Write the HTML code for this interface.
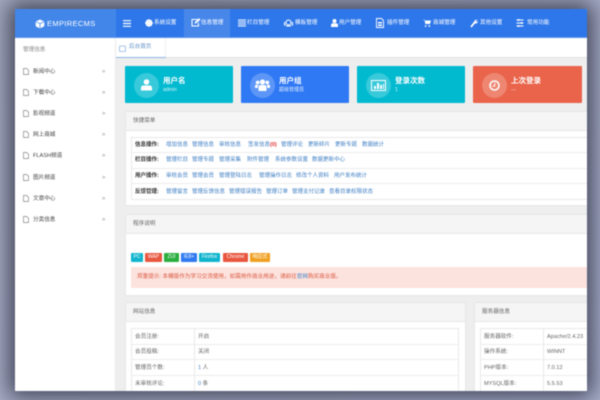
<!DOCTYPE html>
<html lang="zh"><head><meta charset="utf-8"><title>EmpireCMS</title>
<style>
html,body{margin:0;padding:0}
body{width:600px;height:400px;overflow:hidden;position:relative;background:linear-gradient(135deg,#a6abc2,#aab1cd);font-family:"Liberation Sans","Noto Sans CJK SC",sans-serif;}
#w{position:absolute;left:15px;top:9px;width:572px;height:382px;background:#fff;box-shadow:0 0 22px 6px rgba(30,32,50,.75);border-radius:1px;overflow:hidden;filter:blur(.4px)}
#w div,#w span,#w svg{position:absolute}
.t{white-space:nowrap;font-size:5.6px;line-height:8px;color:#666}
.n{white-space:nowrap;font-size:5.6px;line-height:8px;color:#fff;top:10px}
.l{white-space:nowrap;font-size:5.5px;line-height:8px;color:#3f7fc4}
.b{white-space:nowrap;font-size:5.5px;line-height:8px;color:#333;font-weight:bold;left:120px}
.m{font-size:6px;color:#999;left:87px}
.c{border-radius:1px}
.ci{left:9px;top:7px;width:25px;height:25px;border-radius:50%;background:rgba(255,255,255,.22)}
.h{white-space:nowrap;color:#fff;font-weight:bold;font-size:7.5px;line-height:10px;left:38px;top:10px}
.s{white-space:nowrap;color:rgba(255,255,255,.85);font-size:5px;line-height:7px;left:38px;top:21px}
.p{background:#fff;border:1px solid #e7e7e7;box-sizing:border-box}
.ph{left:0;top:0;right:0;height:18px;background:#f5f5f5;border-bottom:1px solid #e7e7e7}
.pt{white-space:nowrap;font-size:5.6px;line-height:8px;color:#666;left:7px;top:5px}
.r{left:0;right:0;height:1px;background:#ececec}
.g{top:0;height:9px;border-radius:1px;color:#fff;font-size:5px;line-height:9px;text-align:center}
</style></head><body>
<div id="w">
<!-- top bar -->
<div style="left:0;top:0;width:572px;height:29px;background:#2e77ea"></div>
<div style="left:0;top:0;width:101px;height:29px;background:#4286ea"></div>
<div style="left:169px;top:0;width:46px;height:29px;background:#4787ea"></div>
<div style="left:0;top:28px;width:572px;height:1px;background:#5b93ee"></div>
<svg style="left:20px;top:10px" width="10" height="10" viewBox="0 0 10 10"><path d="M5 .5 9.3 2.5V7.3L5 9.5.7 7.3V2.5Z" fill="#fff"/><path d="M1 2.7 5 4.7 9 2.7M5 4.7V9.3" stroke="#4286ea" stroke-width=".8" fill="none"/></svg>
<div style="left:32px;top:10px;color:#fff;font-size:7.5px;line-height:10px;letter-spacing:.35px;white-space:nowrap">EMPIRECMS</div>
<svg style="left:108px;top:11px" width="8" height="7" viewBox="0 0 8 7"><path d="M0 .7H8M0 3.5H8M0 6.3H8" stroke="#fff" stroke-width="1.2"/></svg>
<svg style="left:130px;top:10px" width="8" height="8" viewBox="0 0 8 8"><circle cx="4" cy="4" r="2.6" fill="none" stroke="#fff" stroke-width="1.8"/><path d="M4 0V8M0 4H8M1.2 1.2 6.8 6.8M6.8 1.2 1.2 6.8" stroke="#fff" stroke-width=".9"/></svg>
<span class="n" style="left:139px">系统设置</span>
<svg style="left:176px;top:9px" width="10" height="9" viewBox="0 0 10 9"><path d="M7 1.5H1V8H7.500V5" fill="none" stroke="#fff" stroke-width="1"/><path d="M3.500 5.500 4 4 8 .3 9.500 1.600 5.500 5.300Z" fill="#fff"/></svg>
<span class="n" style="left:186px">信息管理</span>
<svg style="left:223px;top:10px" width="8" height="8" viewBox="0 0 8 8"><path d="M0 1H8M0 3H8M0 5H8M0 7H8" stroke="#fff" stroke-width="1"/></svg>
<span class="n" style="left:232px">栏目管理</span>
<svg style="left:269px;top:10px" width="9" height="8" viewBox="0 0 9 8"><circle cx="4.500" cy="3.500" r="2.500" fill="none" stroke="#fff" stroke-width="1.100"/><path d="M1 3.500H0.500V6H1.500M8 3.500H8.500V6H7.500M2 7H7" stroke="#fff" stroke-width="1" fill="none"/></svg>
<span class="n" style="left:280px">模板管理</span>
<svg style="left:316px;top:10px" width="7" height="8" viewBox="0 0 7 8"><circle cx="3.500" cy="2" r="2" fill="#fff"/><path d="M0 8V6.200Q0 4.300 2 4.300H5Q7 4.300 7 6.200V8Z" fill="#fff"/></svg>
<span class="n" style="left:324px">用户管理</span>
<svg style="left:361px;top:9px" width="8" height="10" viewBox="0 0 8 10"><path d="M.5.500H5.500L7.500 2.500V9.500H.5Z" fill="none" stroke="#fff" stroke-width=".9"/><path d="M2 4H6V5.500H2ZM2 6.500H6V8H2Z" fill="#fff"/></svg>
<span class="n" style="left:372px">插件管理</span>
<svg style="left:408px;top:10px" width="8" height="8" viewBox="0 0 8 8"><path d="M0 .5H1.500L2.300 5H7L8 1.500H1.800Z" fill="#fff"/><circle cx="2.700" cy="7" r=".9" fill="#fff"/><circle cx="6.300" cy="7" r=".9" fill="#fff"/></svg>
<span class="n" style="left:418px">商城管理</span>
<svg style="left:455px;top:10px" width="8" height="9" viewBox="0 0 8 9"><path d="M1 8 4.500 3.500" stroke="#fff" stroke-width="1.800"/><path d="M4 3.500Q4 .7 7.500.5L5.800 2.300 6.500 3 8 1.800Q7.800 5 4.800 4.500Z" fill="#fff"/></svg>
<span class="n" style="left:465px">其他设置</span>
<svg style="left:501px;top:10px" width="8" height="8" viewBox="0 0 8 8"><path d="M.5 1H7.500M.5 4H7.500M.5 7H7.500" stroke="#fff" stroke-width=".9"/><rect x="1.500" y=".2" width="2" height="1.600" fill="#fff"/><rect x="4.500" y="3.200" width="2" height="1.600" fill="#fff"/><rect x="1.500" y="6.200" width="2" height="1.600" fill="#fff"/></svg>
<span class="n" style="left:512px">常用功能</span>

<!-- sidebar -->
<div style="left:0;top:29px;width:101px;height:353px;background:#fff;border-right:1px solid #eaeaea;box-sizing:border-box"></div>
<span class="t" style="left:8px;top:37px;color:#888">管理信息</span>
<span class="t" style="left:18px;top:59px;color:#444">新闻中心</span><span class="t m" style="top:59px">»</span>
<span class="t" style="left:18px;top:80px;color:#444">下载中心</span><span class="t m" style="top:80px">»</span>
<span class="t" style="left:18px;top:101px;color:#444">影视频道</span><span class="t m" style="top:101px">»</span>
<span class="t" style="left:18px;top:122px;color:#444">网上商城</span><span class="t m" style="top:122px">»</span>
<span class="t" style="left:18px;top:143px;color:#444">FLASH频道</span><span class="t m" style="top:143px">»</span>
<span class="t" style="left:18px;top:165px;color:#444">图片频道</span><span class="t m" style="top:165px">»</span>
<span class="t" style="left:18px;top:186px;color:#444">文章中心</span><span class="t m" style="top:186px">»</span>
<span class="t" style="left:18px;top:207px;color:#444">分类信息</span><span class="t m" style="top:207px">»</span>
<svg style="left:8px;top:59px" width="6" height="7" viewBox="0 0 6 7"><path d="M.5.500H3.700L5.500 2.200V6.500H.5Z" fill="none" stroke="#888" stroke-width=".7"/></svg>
<svg style="left:8px;top:80px" width="6" height="7" viewBox="0 0 6 7"><path d="M.5.500H3.700L5.500 2.200V6.500H.5Z" fill="none" stroke="#888" stroke-width=".7"/></svg>
<svg style="left:8px;top:101px" width="6" height="7" viewBox="0 0 6 7"><path d="M.5.500H3.700L5.500 2.200V6.500H.5Z" fill="none" stroke="#888" stroke-width=".7"/></svg>
<svg style="left:8px;top:122px" width="6" height="7" viewBox="0 0 6 7"><path d="M.5.500H3.700L5.500 2.200V6.500H.5Z" fill="none" stroke="#888" stroke-width=".7"/></svg>
<svg style="left:8px;top:143px" width="6" height="7" viewBox="0 0 6 7"><path d="M.5.500H3.700L5.500 2.200V6.500H.5Z" fill="none" stroke="#888" stroke-width=".7"/></svg>
<svg style="left:8px;top:165px" width="6" height="7" viewBox="0 0 6 7"><path d="M.5.500H3.700L5.500 2.200V6.500H.5Z" fill="none" stroke="#888" stroke-width=".7"/></svg>
<svg style="left:8px;top:186px" width="6" height="7" viewBox="0 0 6 7"><path d="M.5.500H3.700L5.500 2.200V6.500H.5Z" fill="none" stroke="#888" stroke-width=".7"/></svg>
<svg style="left:8px;top:207px" width="6" height="7" viewBox="0 0 6 7"><path d="M.5.500H3.700L5.500 2.200V6.500H.5Z" fill="none" stroke="#888" stroke-width=".7"/></svg>

<!-- tab -->
<div style="left:101px;top:29px;width:471px;height:20px;background:#fff;border-bottom:1px solid #e2e2e2;box-sizing:border-box"></div>
<div style="left:101px;top:48px;width:50px;height:1px;background:#8db4e8"></div>
<div style="left:150px;top:29px;width:1px;height:19px;background:#eee"></div>
<svg style="left:104px;top:36px" width="7" height="7" viewBox="0 0 7 7"><rect x=".5" y="1" width="6" height="5.500" rx=".8" fill="none" stroke="#8fb4e0" stroke-width=".8"/></svg>
<span class="t" style="left:114px;top:34px;color:#5f8fc9">后台首页</span>

<!-- content -->
<div style="left:101px;top:49px;width:471px;height:333px;background:#eeeeee"></div>

<div class="c" style="left:110px;top:57px;width:108px;height:37px;background:#01bad0"><div class="ci"></div>
<svg style="left:16px;top:13px" width="11" height="12" viewBox="0 0 11 12"><circle cx="5.500" cy="3" r="2.800" fill="#fff"/><path d="M0 11.500V9Q0 6.500 2.500 6.500H8.500Q11 6.500 11 9V11.500Z" fill="#fff"/></svg>
<span class="h">用户名</span><span class="s">admin</span></div>

<div class="c" style="left:226px;top:57px;width:108px;height:37px;background:#3079f4"><div class="ci"></div>
<svg style="left:14px;top:13px" width="15" height="12" viewBox="0 0 15 12"><circle cx="7.500" cy="3" r="2.600" fill="#fff"/><circle cx="2.700" cy="3.500" r="1.900" fill="#fff"/><circle cx="12.300" cy="3.500" r="1.900" fill="#fff"/><path d="M3.500 12V8Q3.500 6 5.500 6H9.500Q11.500 6 11.500 8V12Z" fill="#fff"/><path d="M0 9V7Q0 5.800 1.500 5.800H3L2.700 9ZM15 9V7Q15 5.800 13.500 5.800H12L12.300 9Z" fill="#fff"/></svg>
<span class="h">用户组</span><span class="s">超级管理员</span></div>

<div class="c" style="left:342px;top:57px;width:108px;height:37px;background:#01bad0"><div class="ci"></div>
<svg style="left:14px;top:14px" width="15" height="11" viewBox="0 0 15 11"><rect x=".5" y=".5" width="14" height="10" fill="none" stroke="#fff"/><path d="M3 9V6H5V9ZM6 9V3H8V9ZM9 9V5H11V9ZM12 9V4H13V9Z" fill="#fff"/></svg>
<span class="h">登录次数</span><span class="s">1</span></div>

<div class="c" style="left:458px;top:57px;width:109px;height:37px;background:#e9644a"><div class="ci"></div>
<svg style="left:16px;top:14px" width="11" height="11" viewBox="0 0 11 11"><circle cx="5.500" cy="5.500" r="4.500" fill="none" stroke="#fff" stroke-width="1.600"/><path d="M5.800 2.800V6H3.500" fill="none" stroke="#fff"/></svg>
<span class="h">上次登录</span><span class="s">---</span></div>

<!-- quick menu -->
<div class="p" style="left:110px;top:102px;width:470px;height:95px"><div class="ph"></div><span class="pt">快捷菜单</span>
<div style="left:5px;top:25px;width:470px;height:63px;border:1px solid #e8e8e8;box-sizing:border-box"></div>
<div class="r" style="left:5px;top:40px"></div><div class="r" style="left:5px;top:56px"></div><div class="r" style="left:5px;top:71px"></div>
</div>
<span class="b" style="top:132px">信息操作:</span>
<span class="l" style="left:151px;top:132px">增加信息</span><span class="l" style="left:177px;top:132px">管理信息</span><span class="l" style="left:204px;top:132px">审核信息</span><span class="l" style="left:233px;top:132px">签发信息<b style="color:#d33">(0)</b></span><span class="l" style="left:266px;top:132px">管理评论</span><span class="l" style="left:293px;top:132px">更新碎片</span><span class="l" style="left:320px;top:132px">更新专题</span><span class="l" style="left:347px;top:132px">数据统计</span>
<span class="b" style="top:147px">栏目操作:</span>
<span class="l" style="left:151px;top:147px">管理栏目</span><span class="l" style="left:177px;top:147px">管理专题</span><span class="l" style="left:204px;top:147px">管理采集</span><span class="l" style="left:232px;top:147px">附件管理</span><span class="l" style="left:260px;top:147px">系统参数设置</span><span class="l" style="left:297px;top:147px">数据更新中心</span>
<span class="b" style="top:163px">用户操作:</span>
<span class="l" style="left:151px;top:163px">审核会员</span><span class="l" style="left:177px;top:163px">管理会员</span><span class="l" style="left:204px;top:163px">管理登陆日志</span><span class="l" style="left:244px;top:163px">管理操作日志</span><span class="l" style="left:281px;top:163px">修改个人资料</span><span class="l" style="left:319px;top:163px">用户发布统计</span>
<span class="b" style="top:179px">反馈管理:</span>
<span class="l" style="left:151px;top:179px">管理留言</span><span class="l" style="left:177px;top:179px">管理反馈信息</span><span class="l" style="left:214px;top:179px">管理错误报告</span><span class="l" style="left:251px;top:179px">管理订单</span><span class="l" style="left:277px;top:179px">管理支付记录</span><span class="l" style="left:314px;top:179px">查看目录权限状态</span>

<!-- program info -->
<div class="p" style="left:110px;top:205px;width:470px;height:82px"><div class="ph"></div><span class="pt">程序说明</span>
<div style="left:5px;top:38px;width:470px;height:9px">
<span class="g" style="left:0;width:12px;background:#10b4cd">PC</span>
<span class="g" style="left:14px;width:17px;background:#e8563f">WAP</span>
<span class="g" style="left:33px;width:15px;background:#2aae3e">ZUI</span>
<span class="g" style="left:50px;width:16px;background:#3079f0">IE8+</span>
<span class="g" style="left:68px;width:21px;background:#10b4cd">Firefox</span>
<span class="g" style="left:92px;width:25px;background:#e8563f">Chrome</span>
<span class="g" style="left:119px;width:20px;background:#f0a020">响应式</span>
</div>
<div style="left:5px;top:52px;width:470px;height:21px;background:#fde3de"></div>
<span class="t" style="left:11px;top:58px;color:#d9583f">郑重提示:&nbsp;本模版作为学习交流使用，如需用作商业用途，请前往<span style="position:static;color:#3f7fc4">官网</span>购买商业版。</span>
</div>

<!-- site info -->
<div class="p" style="left:110px;top:293px;width:341px;height:100px"><div class="ph"></div><span class="pt">网站信息</span>
<div style="left:5px;top:25px;width:328px;height:80px;border:1px solid #e8e8e8;box-sizing:border-box"></div>
<div style="left:68px;top:25px;width:1px;height:80px;background:#e8e8e8"></div>
<div class="r" style="left:5px;top:41px;width:328px"></div><div class="r" style="left:5px;top:56px;width:328px"></div><div class="r" style="left:5px;top:72px;width:328px"></div>
<span class="t" style="left:9px;top:30px">会员注册:</span><span class="t" style="left:72px;top:30px">开启</span>
<span class="t" style="left:9px;top:45px">会员投稿:</span><span class="t" style="left:72px;top:45px">关闭</span>
<span class="t" style="left:9px;top:61px">管理员个数:</span><span class="t" style="left:72px;top:61px"><span style="position:static;color:#3f7fc4">1</span> 人</span>
<span class="t" style="left:9px;top:77px">未审核评论:</span><span class="t" style="left:72px;top:77px"><span style="position:static;color:#3f7fc4">0</span> 条</span>
</div>

<!-- server info -->
<div class="p" style="left:459px;top:293px;width:130px;height:100px"><div class="ph"></div><span class="pt">服务器信息</span>
<div style="left:5px;top:25px;width:140px;height:80px;border:1px solid #e8e8e8;box-sizing:border-box"></div>
<div style="left:68px;top:25px;width:1px;height:80px;background:#e8e8e8"></div>
<div class="r" style="left:5px;top:41px"></div><div class="r" style="left:5px;top:56px"></div><div class="r" style="left:5px;top:72px"></div>
<span class="t" style="left:9px;top:30px">服务器软件:</span><span class="t" style="left:72px;top:30px">Apache/2.4.23</span>
<span class="t" style="left:9px;top:45px">操作系统:</span><span class="t" style="left:72px;top:45px">WINNT</span>
<span class="t" style="left:9px;top:61px">PHP版本:</span><span class="t" style="left:72px;top:61px">7.0.12</span>
<span class="t" style="left:9px;top:77px">MYSQL版本:</span><span class="t" style="left:72px;top:77px">5.5.53</span>
</div>
</div>
</body></html>
